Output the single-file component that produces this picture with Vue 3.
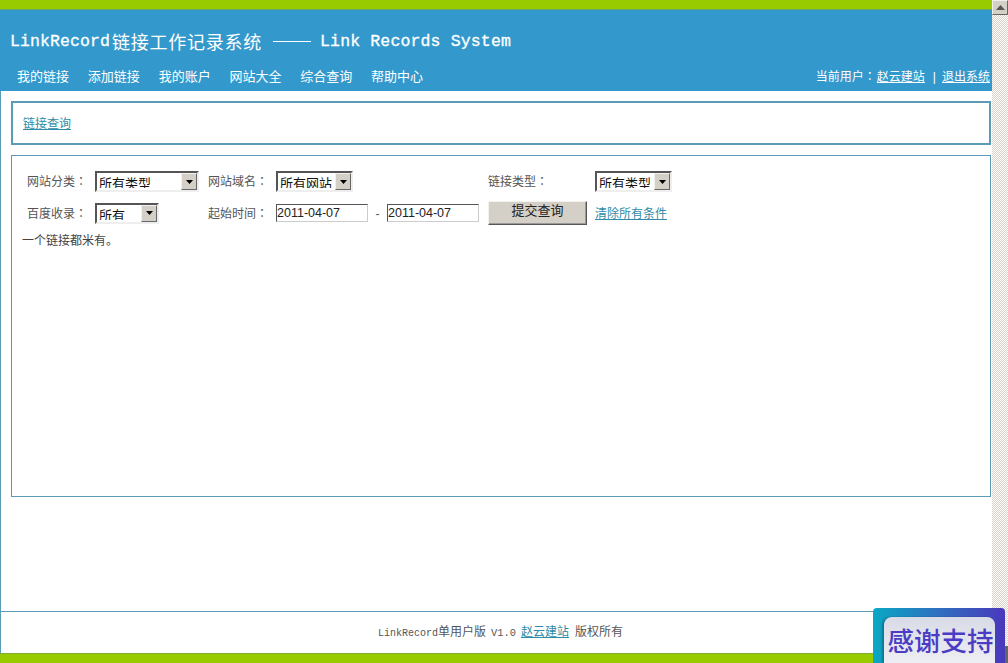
<script setup>
const navItems = ['我的链接', '添加链接', '我的账户', '网站大全', '综合查询', '帮助中心']
</script>

<template>
  <div class="page">
    <div class="main">
      <div class="green top"></div>
      <header class="header">
        <h1 class="title"><span class="t-mono">LinkRecord</span><span class="t-cjk">链接工作记录系统</span><span class="t-line"></span><span class="t-mono wide">Link Records System</span></h1>
        <div class="nav-row">
          <nav class="nav"><a v-for="item in navItems" :key="item">{{ item }}</a></nav>
          <div class="user">当前用户<span class="colon">：</span><a href="#">赵云建站</a><span class="sep">|</span><a href="#">退出系统</a></div>
        </div>
      </header>
      <main class="content">
        <div class="panel crumb"><a href="#" class="link">链接查询</a></div>
        <section class="panel query">
          <div class="form">
            <label>网站分类<span class="colon">：</span></label>
            <div class="sel w104"><select><option>所有类型</option></select><span class="drop"><svg width="7" height="4" viewBox="0 0 7 4"><path d="M0 0h7L3.500 4z" fill="#000"/></svg></span></div>
            <label>网站域名<span class="colon">：</span></label>
            <div class="cell"><div class="sel w77"><select><option>所有网站</option></select><span class="drop"><svg width="7" height="4" viewBox="0 0 7 4"><path d="M0 0h7L3.500 4z" fill="#000"/></svg></span></div></div>
            <label>链接类型<span class="colon">：</span></label>
            <div class="cell"><div class="sel w77"><select><option>所有类型</option></select><span class="drop"><svg width="7" height="4" viewBox="0 0 7 4"><path d="M0 0h7L3.500 4z" fill="#000"/></svg></span></div></div>

            <label>百度收录<span class="colon">：</span></label>
            <div class="cell"><div class="sel w64"><select><option>所有</option></select><span class="drop"><svg width="7" height="4" viewBox="0 0 7 4"><path d="M0 0h7L3.500 4z" fill="#000"/></svg></span></div></div>
            <label>起始时间<span class="colon">：</span></label>
            <div class="dates"><input value="2011-04-07" /><span class="dash">-</span><input value="2011-04-07" /></div>
            <button class="submit" type="button">提交查询</button>
            <div class="cell"><a href="#" class="link clear">清除所有条件</a></div>
          </div>
          <p class="empty">一个链接都米有。</p>
        </section>
      </main>
      <footer class="footer"><span class="f-mono">LinkRecord</span>单用户版<span class="f-mono ver">V1.0</span><a href="#" class="link">赵云建站</a><span class="own">版权所有</span></footer>
      <div class="green bottom"></div>
    </div>
    <div class="scrollbar">
      <span class="sb-btn"><svg width="9" height="5" viewBox="0 0 9 5"><path d="M4.500 0L9 5H0z" fill="#555"/></svg></span>
      <span class="sb-btn end"></span>
    </div>
    <div class="thanks"><div class="thanks-in">感谢支持</div></div>
  </div>
</template>

<style>
html, body { margin: 0; height: 100%; overflow: hidden; background: #fff; }
</style>

<style scoped>
.page {
  display: flex;
  width: 1008px;
  height: 663px;
  position: relative;
  overflow: hidden;
  font-family: "Liberation Sans", "Noto Sans CJK SC", sans-serif;
  font-size: 12px;
  color: #555;
}
.main { width: 992px; display: flex; flex-direction: column; height: 663px; }
.green { background: #99cc00; height: 10px; flex: none; box-sizing: border-box; }
.green.top { border-bottom: 1px solid #5fa866; }
.green.bottom { border-top: 1px solid #7fae33; }
.header { background: #3399cc; height: 81px; flex: none; box-sizing: border-box; padding: 20px 1px 0 0; color: #fff; }
.title { margin: 0; height: 22px; display: flex; align-items: center; padding-left: 10px; font-weight: normal; white-space: nowrap; }
.t-mono { font-family: "Liberation Mono", monospace; font-size: 16.500px; letter-spacing: 0.100px; -webkit-text-stroke: 0.300px #fff; }
.t-mono.wide { letter-spacing: 0.150px; }
.t-cjk { font-family: "Noto Sans CJK SC", sans-serif; font-size: 18px; letter-spacing: 0.750px; margin-left: 2px; }
.t-line { width: 38px; height: 1px; background: #fff; margin: 0 9px 0 11px; }
.nav-row { display: flex; justify-content: space-between; align-items: center; margin-top: 14px; height: 20px; }
.nav { display: flex; gap: 18.800px; padding: 0 0 2px 17px; font-size: 13px; }
.user { white-space: nowrap; padding: 0 1px 2px 0; }
.user a { color: #fff; text-decoration: underline; }
.user .colon { margin-right: 1px; }
.colon { font-family: "Noto Sans CJK TC", sans-serif; }
.sep { margin: 0 6px 0 8px; }
.content { flex: 1; box-sizing: border-box; border-left: 1px solid #5b9bb5; padding: 10px 1px 0 10px; min-height: 0; }
.panel { box-sizing: border-box; background: #fff; }
.crumb { height: 44px; border: 2px solid #5b9bb5; display: flex; align-items: center; padding: 0 0 2px 10px; }
.link { color: #2f8ca8; text-decoration: underline; }
.query { height: 342px; margin-top: 10px; border: 1px solid #5b9bb5; padding: 15px 0 0 15px; }
.form { display: grid; grid-template-columns: 68px 113px 68px 212px 107px 1fr; grid-template-rows: 21px 24px; row-gap: 9px; align-items: center; }
.form label { padding-bottom: 2px; }
.cell { display: flex; align-items: center; }
.clear { margin: 0 0 2px 0; }
.sel {
  display: flex;
  box-sizing: border-box;
  height: 21px;
  border: 2px solid;
  border-color: #555 #eee #eee #555;
  background: #fff;
}
.w104 { width: 104px; }
.w77 { width: 77px; }
.w64 { width: 64px; }
.sel select {
  appearance: none;
  flex: 1;
  min-width: 0;
  border: 0;
  outline: 0;
  background: #fff;
  padding: 0 0 2px 2px;
  font: 13px "Noto Sans CJK SC", sans-serif;
  color: #111;
}
.drop {
  width: 16px;
  flex: none;
  display: flex;
  align-items: center;
  justify-content: center;
  box-sizing: border-box;
  background: #d4d0c8;
  border: 1px solid;
  border-color: #f2f0ec #666 #666 #f2f0ec;
}
.dates { display: flex; align-items: center; }
.dates input {
  box-sizing: border-box;
  width: 92px;
  height: 18px;
  border: 1px solid;
  border-color: #555 #ccc #ccc #555;
  padding: 0;
  font: 12.500px "Liberation Sans", sans-serif;
  color: #222;
  outline: 0;
}
.dash { width: 19px; text-align: center; padding-top: 2px; }
.submit {
  width: 99px;
  height: 24px;
  box-sizing: border-box;
  background: #d4d0c8;
  border: 1px solid;
  border-color: #f4f2ee #555 #555 #f4f2ee;
  box-shadow: inset -1px -1px 0 #999;
  padding: 0 0 7px;
  font: 13px/14px "Noto Sans CJK SC", sans-serif;
  color: #222;
}
.empty { margin: 8px 0 0 -5px; line-height: 16px; color: #444; }
.footer {
  flex: none;
  height: 42px;
  box-sizing: border-box;
  border-top: 1px solid #5b9bb5;
  border-left: 1px solid #5b9bb5;
  padding: 11px 0 0 377px;
  line-height: 18px;
  white-space: nowrap;
}
.f-mono { font-family: "Liberation Mono", monospace; font-size: 10px; }
.ver { margin: 0 5px; font-size: 10.400px; }
.own { margin-left: 6px; }
.scrollbar {
  width: 16px;
  flex: none;
  display: flex;
  flex-direction: column;
  justify-content: space-between;
  background-color: #fff;
  background-image: repeating-conic-gradient(#d4d0c8 0 25%, #fff 0 50%);
  background-size: 2px 2px;
}
.sb-btn {
  display: flex;
  width: 16px;
  height: 15px;
  box-sizing: border-box;
  align-items: center;
  justify-content: center;
  background: #d4d0c8;
  border: 1px solid;
  border-color: #f2f0ec #666 #666 #f2f0ec;
}
.sb-btn.end { height: 17px; background: #666; border: 0; }
.thanks {
  position: absolute;
  left: 873px;
  top: 608px;
  width: 132px;
  height: 55px;
  box-sizing: border-box;
  padding: 9px 10px 0 11px;
  border-radius: 4px 4px 0 0;
  background: linear-gradient(90deg, #0aa8c4, #2f6fc0 50%, #4a38bc);
}
.thanks-in {
  height: 46px;
  box-sizing: border-box;
  padding-left: 2px;
  border-radius: 8px 8px 0 0;
  background: linear-gradient(180deg, #d8dbe6, #eeeef4);
  box-shadow: -2px 0 2px rgba(0, 0, 0, 0.25);
  font: 500 26.500px/46px "Noto Sans CJK SC", sans-serif;
  color: #4a3cc4;
  text-align: center;
  white-space: nowrap;
}
</style>
